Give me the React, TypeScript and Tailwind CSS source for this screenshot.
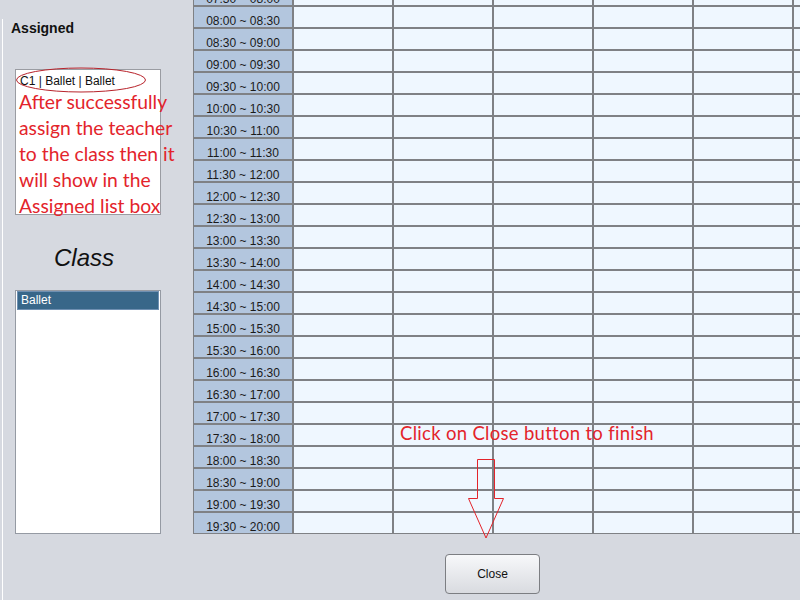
import React from "react";

const times = [
  "07:30 ~ 08:00",
  "08:00 ~ 08:30",
  "08:30 ~ 09:00",
  "09:00 ~ 09:30",
  "09:30 ~ 10:00",
  "10:00 ~ 10:30",
  "10:30 ~ 11:00",
  "11:00 ~ 11:30",
  "11:30 ~ 12:00",
  "12:00 ~ 12:30",
  "12:30 ~ 13:00",
  "13:00 ~ 13:30",
  "13:30 ~ 14:00",
  "14:00 ~ 14:30",
  "14:30 ~ 15:00",
  "15:00 ~ 15:30",
  "15:30 ~ 16:00",
  "16:00 ~ 16:30",
  "16:30 ~ 17:00",
  "17:00 ~ 17:30",
  "17:30 ~ 18:00",
  "18:00 ~ 18:30",
  "18:30 ~ 19:00",
  "19:00 ~ 19:30",
  "19:30 ~ 20:00",
];

const note = [
  "After successfully",
  "assign the teacher",
  "to the class then it",
  "will show in the",
  "Assigned list box",
];

export default function App() {
  return (
    <div className="relative w-[800px] h-[600px] overflow-hidden bg-[#d6d9e0] font-['Liberation_Sans',Arial,sans-serif] text-[#111]">
      <div className="flex h-full">
        {/* left side */}
        <div className="w-[193px] shrink-0 pt-[19px] pl-[2px]">
          <div className="h-full border-l border-white">
            <div className="pt-px pl-[8px] text-[14px] leading-4 font-bold">Assigned</div>

            <div className="ml-[12px] mt-[33px] w-[146px] h-[146px] border border-[#9a9ca2] bg-white">
              <div className="pl-[4px] pt-[4px] text-[12px] leading-[14px]">C1 | Ballet | Ballet</div>
              <div className="mt-px pl-[3px] font-['Lato',sans-serif] text-[19.3px] leading-[26px] text-[#e3242b]">
                {note.map((l) => (
                  <div key={l} className="whitespace-nowrap">{l}</div>
                ))}
              </div>
            </div>

            <div className="mt-[29px] pl-[51px] text-[24px] leading-[28px] italic">Class</div>

            <div className="ml-[12px] mt-[18px] w-[146px] h-[244px] border border-[#959aa3] bg-white px-px">
              <div className="h-[19px] border border-[#6f90b2] bg-[#386789] pl-[3px] text-[12px] leading-[17px] text-white">Ballet</div>
            </div>
          </div>
        </div>

        {/* timetable */}
        <div className="flex-1 min-w-0 overflow-hidden">
          <div className="mt-[-15px] w-max grid grid-cols-[98px_repeat(6,98px)] auto-rows-[20px] gap-[2px] bg-[#7f8185] pl-px pb-px">
            {times.map((t) => (
              <React.Fragment key={t}>
                <div className="bg-[#b3c6de] h-5 pt-[4px] leading-[20px] overflow-hidden text-center text-[12px] text-[#1a1a1a]">{t}</div>
                <div className="bg-[#eff7ff]" />
                <div className="bg-[#eff7ff]" />
                <div className="bg-[#eff7ff]" />
                <div className="bg-[#eff7ff]" />
                <div className="bg-[#eff7ff]" />
                <div className="bg-[#eff7ff]" />
              </React.Fragment>
            ))}
          </div>
          <div className="mt-[20px] pl-[252px]">
            <button className="w-[95px] h-[40px] rounded-[4px] border border-[#7c7e82] bg-gradient-to-b from-[#f7f8fa] to-[#d9dbe0] text-[12px] text-[#111]">
              Close
            </button>
          </div>
        </div>
      </div>

      {/* annotations */}
      <svg className="absolute left-0 top-0 pointer-events-none" width="800" height="600">
        <ellipse cx="81" cy="80" rx="64.5" ry="12" fill="none" stroke="#b8232b" strokeWidth="1" />
        <polygon
          points="477.5,459.5 494.5,459.5 494.5,498.5 503.5,498.5 486,538 468.5,498.5 477.5,498.5"
          fill="none"
          stroke="#e3242b"
          strokeWidth="1"
        />
      </svg>
      <div className="absolute left-[400px] top-[421px] whitespace-nowrap font-['Lato',sans-serif] text-[18.5px] tracking-[0.3px] leading-[24px] text-[#e3242b]">
        Click on Close button to finish
      </div>
    </div>
  );
}
